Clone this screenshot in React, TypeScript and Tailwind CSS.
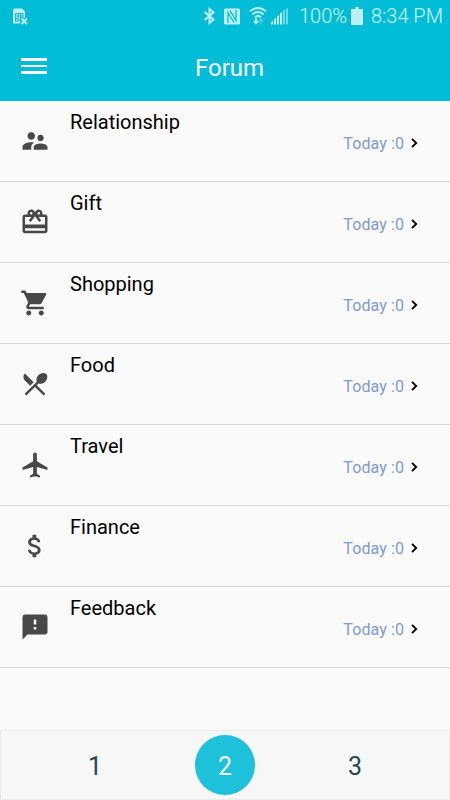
import {
  MdAttachMoney,
  MdFeedback,
  MdLocalAirport,
  MdRedeem,
  MdRestaurantMenu,
  MdShoppingCart,
  MdSupervisorAccount,
} from "react-icons/md";

const topics = [
  { name: "Relationship", icon: MdSupervisorAccount, today: 0 },
  { name: "Gift", icon: MdRedeem, today: 0 },
  { name: "Shopping", icon: MdShoppingCart, today: 0 },
  { name: "Food", icon: MdRestaurantMenu, today: 0 },
  { name: "Travel", icon: MdLocalAirport, today: 0 },
  { name: "Finance", icon: MdAttachMoney, today: 0 },
  { name: "Feedback", icon: MdFeedback, today: 0 },
];

function StatusBar() {
  return (
    <div className="flex h-8 items-center pl-[13px] pr-2 text-[#bdeff6]">
      {/* SIM card missing */}
      <svg width="15" height="17" viewBox="0 0 15 17" fill="none">
        <path d="M1 .5h8L12 3.5v12H0v-14z" fill="currentColor" />
        <path d="M2.5 5.5h7.5v7.5h-7.5zM2.5 8h2.5M2.5 10.5h2.5M7.5 5.5v7M5 5.5v7M5 8h5" stroke="#16b4cc" />
        <path d="M7.5 10l7.5 7M14.5 9.5L7.5 17" stroke="#00bcd7" strokeWidth="4" />
        <path d="M8.5 10.5l5.5 5.5M14 10.500L8.5 16" stroke="currentColor" strokeWidth="1.9" />
      </svg>

      <div className="ml-auto flex items-center">
        {/* Bluetooth */}
        <svg width="13" height="18" viewBox="0 0 13 18" fill="none" stroke="currentColor" strokeWidth="2">
          <path d="M1.5 5l9 7.5-4 3.500V2l4 3.500-9 7.500" />
        </svg>
        {/* NFC */}
        <svg className="ml-[8px]" width="16" height="17" viewBox="0 0 16 17" fill="none">
          <path d="M1 .5h14l1 1v14l-1 1H1l-1-1v-14z" fill="currentColor" />
          <path d="M4 15V4.500L10 14.500M6 2.500L12 12.500V2" stroke="#00bcd7" strokeWidth="1.300" />
        </svg>
        {/* Wifi with transfer arrows */}
        <svg className="ml-[9px]" width="18" height="18" viewBox="0 0 18 18" fill="none" stroke="currentColor">
          <path d="M.8 4.500Q9-2.500 17.200 4.500M3.400 7.500Q9 2.500 14.600 7.500M6 10.200Q9 7.500 12 10.200" strokeWidth="2" />
          <path d="M7 11v5.500M4.800 14L7 16.400 9.200 14" strokeWidth="1.800" />
          <path d="M12 17.500V12M9.800 14.300L12 12l2.200 2.300" strokeWidth="1.500" opacity=".4" />
        </svg>
        {/* Signal */}
        <svg className="ml-[4px]" width="17" height="17" viewBox="0 0 17 17" fill="currentColor">
          <path d="M0 16.500V14.500l2-2v4zM3 16.500v-5l2-2v7zM6 16.500v-8l2-2v10zM9 16.500v-11l2-2v13z" />
          <path d="M12 16.500v-14l2-1v15zM15 16.500V1l2-1v16.500z" opacity=".6" />
        </svg>
        <span className="ml-[11px] text-[20px] font-light leading-8 [-webkit-text-stroke:0.2px]">100%</span>
        {/* Battery */}
        <svg className="ml-[4px]" width="12" height="18" viewBox="0 0 12 18" fill="currentColor">
          <path d="M4 0h4v2h4v16H0V2h4z" />
        </svg>
        <span className="-mr-px ml-[8px] text-[20px] font-light leading-8 [-webkit-text-stroke:0.2px]">8:34 PM</span>
      </div>
    </div>
  );
}

export default function App() {
  return (
    <div className="flex h-[800px] w-[450px] flex-col overflow-hidden bg-[#fafafa] font-['Roboto',sans-serif]">
      <header className="h-[101px] shrink-0 bg-[#00bcd7]">
        <StatusBar />
        <div className="grid h-[69px] grid-cols-[47px_1fr_39px] items-center pl-[21px] pr-5">
          <button className="mb-px flex w-[26px] flex-col gap-[4px]" aria-label="Menu">
            <span className="h-[2.5px] w-full bg-white" />
            <span className="h-[2.5px] w-full bg-white" />
            <span className="h-[2.5px] w-full bg-white" />
          </button>
          <h1 className="pt-[2px] text-center text-2xl text-white">Forum</h1>
        </div>
      </header>

      <main className="flex-1">
        {topics.map(({ name, icon: Icon, today }) => (
          <div key={name} className="flex h-[81px] border-b border-[#d8d8d8] pl-5 pr-[32px]">
            <Icon className="mt-[25px] size-[30px] shrink-0 text-[#484848]" />
            <h2 className="ml-5 mt-[6px] text-[20px] leading-[30px] text-black">{name}</h2>
            <div className="ml-auto flex h-[84px] items-center">
              <span className="pt-px text-[16px] tracking-[0.1px] text-[#809bce]">Today :{today}</span>
              <svg className="ml-[7px]" width="7" height="10" viewBox="0 0 7 10" fill="none" stroke="black" strokeWidth="1.9">
                <path d="M1 .8L5.2 5 1 9.2" />
              </svg>
            </div>
          </div>
        ))}
      </main>

      <nav className="grid h-[70px] shrink-0 grid-cols-[1fr_60px_1fr] items-center border border-[#ebebeb] bg-[#f7f7f7] text-[25px] text-[#264653]">
        <span className="pl-[87px] pt-[4px]">1</span>
        <span className="flex size-[60px] items-center justify-center rounded-full bg-[#1dc1d9] pt-[4px] text-white">2</span>
        <span className="pl-[93px] pt-[4px]">3</span>
      </nav>
    </div>
  );
}
